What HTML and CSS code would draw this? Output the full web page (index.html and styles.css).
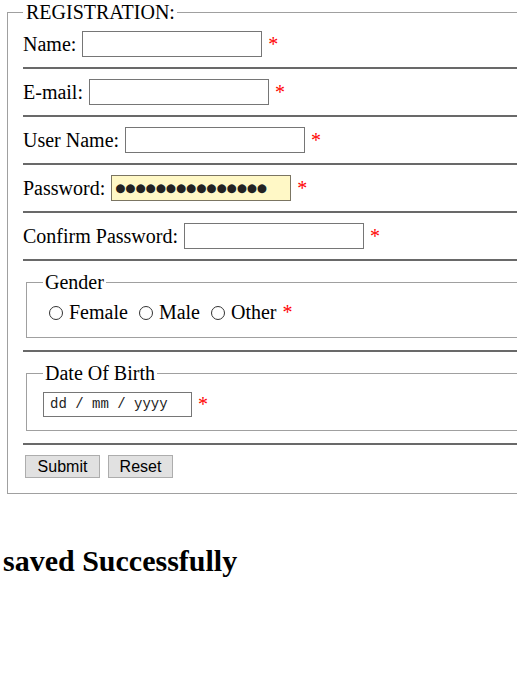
FILE: index.html
```html
<!DOCTYPE html>
<html>
<head>
<meta charset="utf-8">
<title>Registration</title>
<link rel="stylesheet" href="styles.css">
</head>
<body>
<form class="reg-form">
  <fieldset class="reg">
    <legend class="reg-legend">REGISTRATION:</legend>
    <div class="row">
      <label class="lbl">Name:</label>
      <input class="txt" type="text">
      <span class="req">*</span>
    </div>
    <hr class="sep">
    <div class="row">
      <label class="lbl">E-mail:</label>
      <input class="txt" type="text">
      <span class="req">*</span>
    </div>
    <hr class="sep">
    <div class="row">
      <label class="lbl">User Name:</label>
      <input class="txt" type="text">
      <span class="req">*</span>
    </div>
    <hr class="sep">
    <div class="row">
      <label class="lbl">Password:</label>
      <input class="txt pw" type="text" value="●●●●●●●●●●●●●●●" readonly>
      <span class="req">*</span>
    </div>
    <hr class="sep">
    <div class="row">
      <label class="lbl">Confirm Password:</label>
      <input class="txt" type="text">
      <span class="req">*</span>
    </div>
    <hr class="sep">
    <fieldset class="sub">
      <legend class="sub-legend">Gender</legend>
      <div class="radios">
        <label class="opt"><input class="radio" type="radio" name="g">Female</label>
        <label class="opt"><input class="radio" type="radio" name="g">Male</label>
        <label class="opt"><input class="radio" type="radio" name="g">Other</label>
        <span class="req">*</span>
      </div>
    </fieldset>
    <hr class="sep">
    <fieldset class="sub">
      <legend class="sub-legend">Date Of Birth</legend>
      <div class="row dob-row">
        <span class="date">dd / mm / yyyy</span>
        <span class="req">*</span>
      </div>
    </fieldset>
    <hr class="sep">
    <div class="buttons">
      <button class="btn" type="button">Submit</button>
      <button class="btn" type="reset">Reset</button>
    </div>
  </fieldset>
</form>
<h2 class="msg">saved Successfully</h2>
</body>
</html>
```
FILE: styles.css
```css
html {
  overflow: hidden;
  background: #fff;
}
body {
  margin: 0;
  font-family: "Liberation Serif", "Times New Roman", serif;
  font-size: 20px;
  color: #000;
}
.reg-form {
  margin: 0;
}
.reg {
  margin: 1px 0 0 7px;
  width: 640px;
  border: 1px solid #a0a0a0;
  padding: 7px 15px 15px 15px;
}
.reg-legend {
  padding: 0 2px 0 3px;
  line-height: 23px;
}
.row {
  display: flex;
  align-items: center;
  gap: 5px;
  height: 26px;
}
.lbl {
  line-height: 23px;
}
.txt {
  box-sizing: border-box;
  width: 180px;
  height: 26px;
  border: 1px solid #767676;
  margin: 0 1px 0 1px;
  padding: 0 4px;
  background: #fff;
  font-family: "Liberation Serif", serif;
  font-size: 16px;
}
.pw {
  background: #fff8c6;
  border-color: #7b7562;
  font-family: "DejaVu Sans", sans-serif;
  font-size: 11.6px;
  color: #222;
  padding-left: 3px;
  letter-spacing: 0;
}
.req {
  color: #ff0000;
  line-height: 23px;
}
.sep {
  border: 0;
  height: 2px;
  background: #696969;
  margin: 10px 0;
}
.sub {
  margin: 0 0 12px 3px;
  border: 1px solid #a0a0a0;
  padding: 7px 15px 13px 16px;
}
.sub-legend {
  padding: 0 2px;
  line-height: 23px;
}
.radios {
  display: flex;
  align-items: center;
  height: 23px;
}
.opt {
  display: flex;
  align-items: center;
  margin-right: 5px;
}
.radio {
  appearance: none;
  -webkit-appearance: none;
  box-sizing: border-box;
  width: 14px;
  height: 14px;
  border: 1px solid #333;
  border-radius: 50%;
  background: #fff;
  margin: 1px 6px 0 6px;
}
.radios .req {
  margin-left: 1px;
}
.dob-row {
  height: 25px;
  gap: 6px;
}
.date {
  box-sizing: border-box;
  width: 149px;
  height: 25px;
  border: 1px solid #767676;
  padding: 0 6px;
  font-family: "Liberation Mono", "Courier New", monospace;
  font-size: 14px;
  line-height: 23px;
  color: #222;
}
.buttons {
  display: flex;
  gap: 8px;
  margin-top: 3px;
  margin-left: 2px;
}
.btn {
  box-sizing: border-box;
  height: 23px;
  padding: 0 10px;
  border: 1px solid #adadad;
  background: #e1e1e1;
  font-family: "Liberation Sans", Arial, sans-serif;
  font-size: 16px;
  color: #000;
  line-height: 20px;
  border-radius: 0;
}
.btn:first-child {
  width: 75px;
}
.btn:last-child {
  width: 65px;
}
.msg {
  margin: 50px 0 0 3px;
  font-size: 30px;
  font-weight: bold;
}
```
